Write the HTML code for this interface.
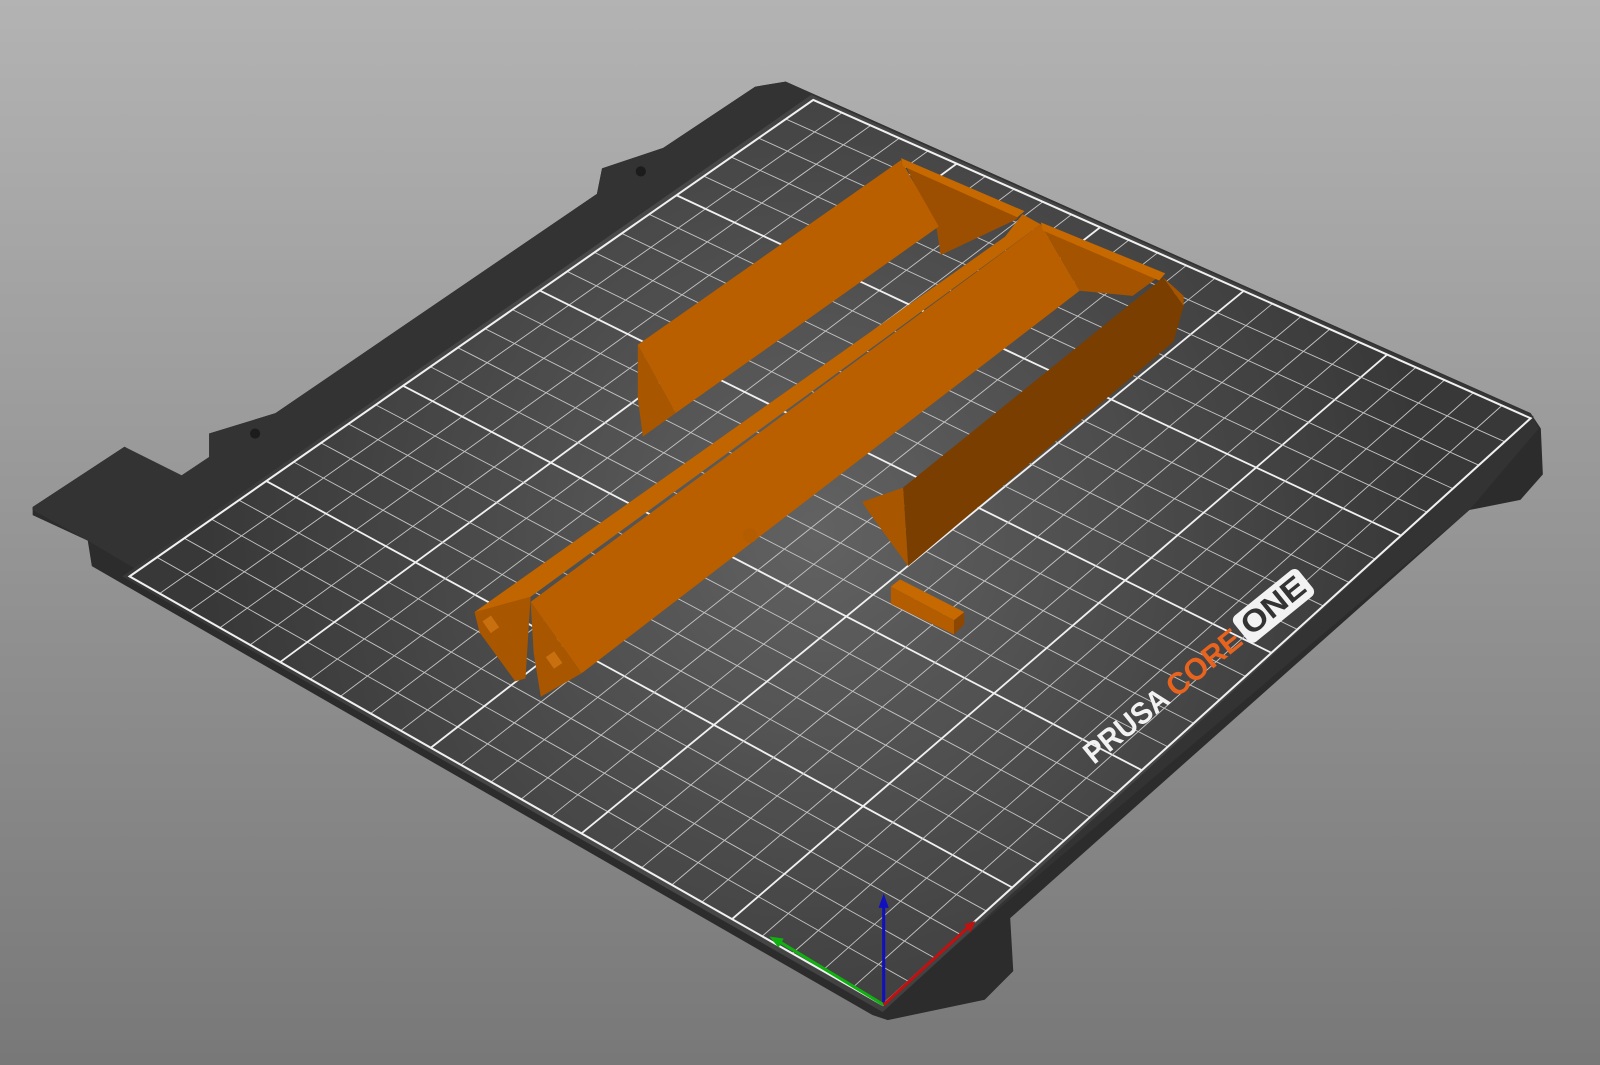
<!DOCTYPE html>
<html><head><meta charset="utf-8"><style>
html,body{margin:0;padding:0;width:1600px;height:1065px;overflow:hidden;background:#999}
svg{display:block}
</style></head><body>
<svg id="s" width="1600" height="1065" viewBox="0 0 1568 1044" preserveAspectRatio="none" xmlns="http://www.w3.org/2000/svg">
<defs>
<linearGradient id="bg" x1="0" y1="0" x2="0" y2="1"><stop offset="0" stop-color="#b3b3b3"/><stop offset="1" stop-color="#787878"/></linearGradient>
<radialGradient id="surf" cx="800" cy="520" r="600" gradientUnits="userSpaceOnUse"><stop offset="0" stop-color="#626262"/><stop offset="0.6" stop-color="#484848"/><stop offset="1" stop-color="#383838"/></radialGradient>
</defs>
<rect width="1568" height="1044" fill="url(#bg)"/>
<path d="M32,497 L122,438 L178,466 L205,448 L205,425 L270,405 L585,190 L590,165 L650,145 L740,85 L770,80 L1500,405 L1510,420 L1512,465 L1490,490 L1440,500 L990,900 L993,952 L965,980 L870,1000 L855,995 L90,555 L86,530 L32,505 Z" fill="#2c2c2c"/>
<path d="M32,497 L122,438 L178,466 L205,448 L205,425 L270,405 L585,190 L590,165 L650,145 L740,85 L770,80 L1500,405 L1508,420 L1440,500 L862,990 L86,530 L32,500 Z" fill="#333"/>
<circle cx="628" cy="168" r="5" fill="#1c1c1c"/><circle cx="250" cy="425" r="5" fill="#1c1c1c"/>
<path d="M120,565 L795,93 L1503,408 L865,992 Z" fill="url(#surf)"/>
<g id="grid" fill="none"></g>
<path d="M127,565 L797,98 L1500,410 L865,985 Z" fill="none" stroke="#f0f0f0" stroke-width="2"/>
<path d="M885,157 L1002,207 L996,215 L922,250 L918,225 Z" fill="#9c4f00"/>
<path d="M625,338 L883,157 L920,222 L662,405 Z" fill="#b95f00"/>
<path d="M625,338 L662,405 L630,428 L625,390 Z" fill="#a85600"/>
<path d="M883,155 L1004,207 L997,213 L885,163 Z" fill="#c66900"/>
<path d="M465,600 L985,232 L1002,210 L1020,220 L520,585 L505,595 Z" fill="#c06500"/>
<path d="M465,600 L520,585 L515,665 L505,668 L470,620 Z" fill="#a85600"/>
<path d="M520,590 L1020,220 L1058,285 L570,660 Z" fill="#b95f00"/>
<path d="M1020,220 L1140,268 L1110,290 L1058,285 Z" fill="#a45400"/>
<path d="M1020,218 L1142,268 L1136,275 L1022,226 Z" fill="#c66900"/>
<path d="M520,590 L570,660 L530,683 L523,640 Z" fill="#a85600"/>
<rect x="538" y="640" width="10" height="14" fill="#c87010" transform="rotate(-35 543 647)"/>
<rect x="476" y="605" width="10" height="14" fill="#c87010" transform="rotate(-35 481 612)"/>
<path d="M885,478 L1140,272 L1160,300 L1150,335 L890,555 Z" fill="#7a3e00"/>
<path d="M1140,272 L1160,290 L1160,300 Z" fill="#a55400"/>
<path d="M845,492 L885,478 L890,555 L850,500 Z" fill="#a85600"/>
<path d="M873,575 L882,568 L945,600 L935,608 Z" fill="#c66900"/>
<path d="M873,575 L935,608 L935,622 L873,592 Z" fill="#b35c00"/>
<path d="M935,608 L945,600 L945,612 L935,622 Z" fill="#8e4700"/>
<circle cx="735" cy="525" r="7" fill="#b35c00"/>
<g transform="translate(1072,750) rotate(-39)" font-family="Liberation Sans, sans-serif" font-weight="bold" font-size="30">
<text x="0" y="0" fill="#f2f2f2" textLength="98" lengthAdjust="spacingAndGlyphs">PRUSA</text>
<text x="104" y="0" fill="#e8641e" textLength="86" lengthAdjust="spacingAndGlyphs">CORE</text>
<rect x="194" y="-27" width="82" height="33" rx="6" fill="#f2f2f2"/>
<text x="199" y="-1" fill="#333" textLength="72" lengthAdjust="spacingAndGlyphs">ONE</text>
</g>
<line x1="866" y1="985" x2="866" y2="885" stroke="#1010c0" stroke-width="3"/>
<path d="M861,890 L866,876 L871,890 Z" fill="#1010c0"/>
<line x1="866" y1="985" x2="762" y2="922" stroke="#10b010" stroke-width="3"/>
<path d="M768,920 L754,918 L763,929 Z" fill="#10b010"/>
<line x1="866" y1="985" x2="950" y2="908" stroke="#c01010" stroke-width="3"/>
<path d="M945,906 L956,903 L951,914 Z" fill="#c01010"/>
</svg>
<script>
(function(){
var L=[127,565],T=[797,98],R=[1500,410],B=[865,985];
function P(u,v){
 var x=(1-u)*(1-v)*L[0]+u*(1-v)*T[0]+u*v*R[0]+(1-u)*v*B[0];
 var y=(1-u)*(1-v)*L[1]+u*(1-v)*T[1]+u*v*R[1]+(1-u)*v*B[1];
 return x.toFixed(1)+","+y.toFixed(1);}
var g=document.getElementById("grid"),N=25,h="";
for(var i=1;i<N;i++){var t=i/N,maj=i%5==0,sw=maj?1.8:0.9,c=maj?"#f0f0f0":"#c4c4c4";
 h+='<path d="M'+P(t,0)+' L'+P(t,1)+'" stroke="'+c+'" stroke-width="'+sw+'"/>';
 h+='<path d="M'+P(0,t)+' L'+P(1,t)+'" stroke="'+c+'" stroke-width="'+sw+'"/>';}
g.innerHTML=h;
})();
</script>
</body></html>
